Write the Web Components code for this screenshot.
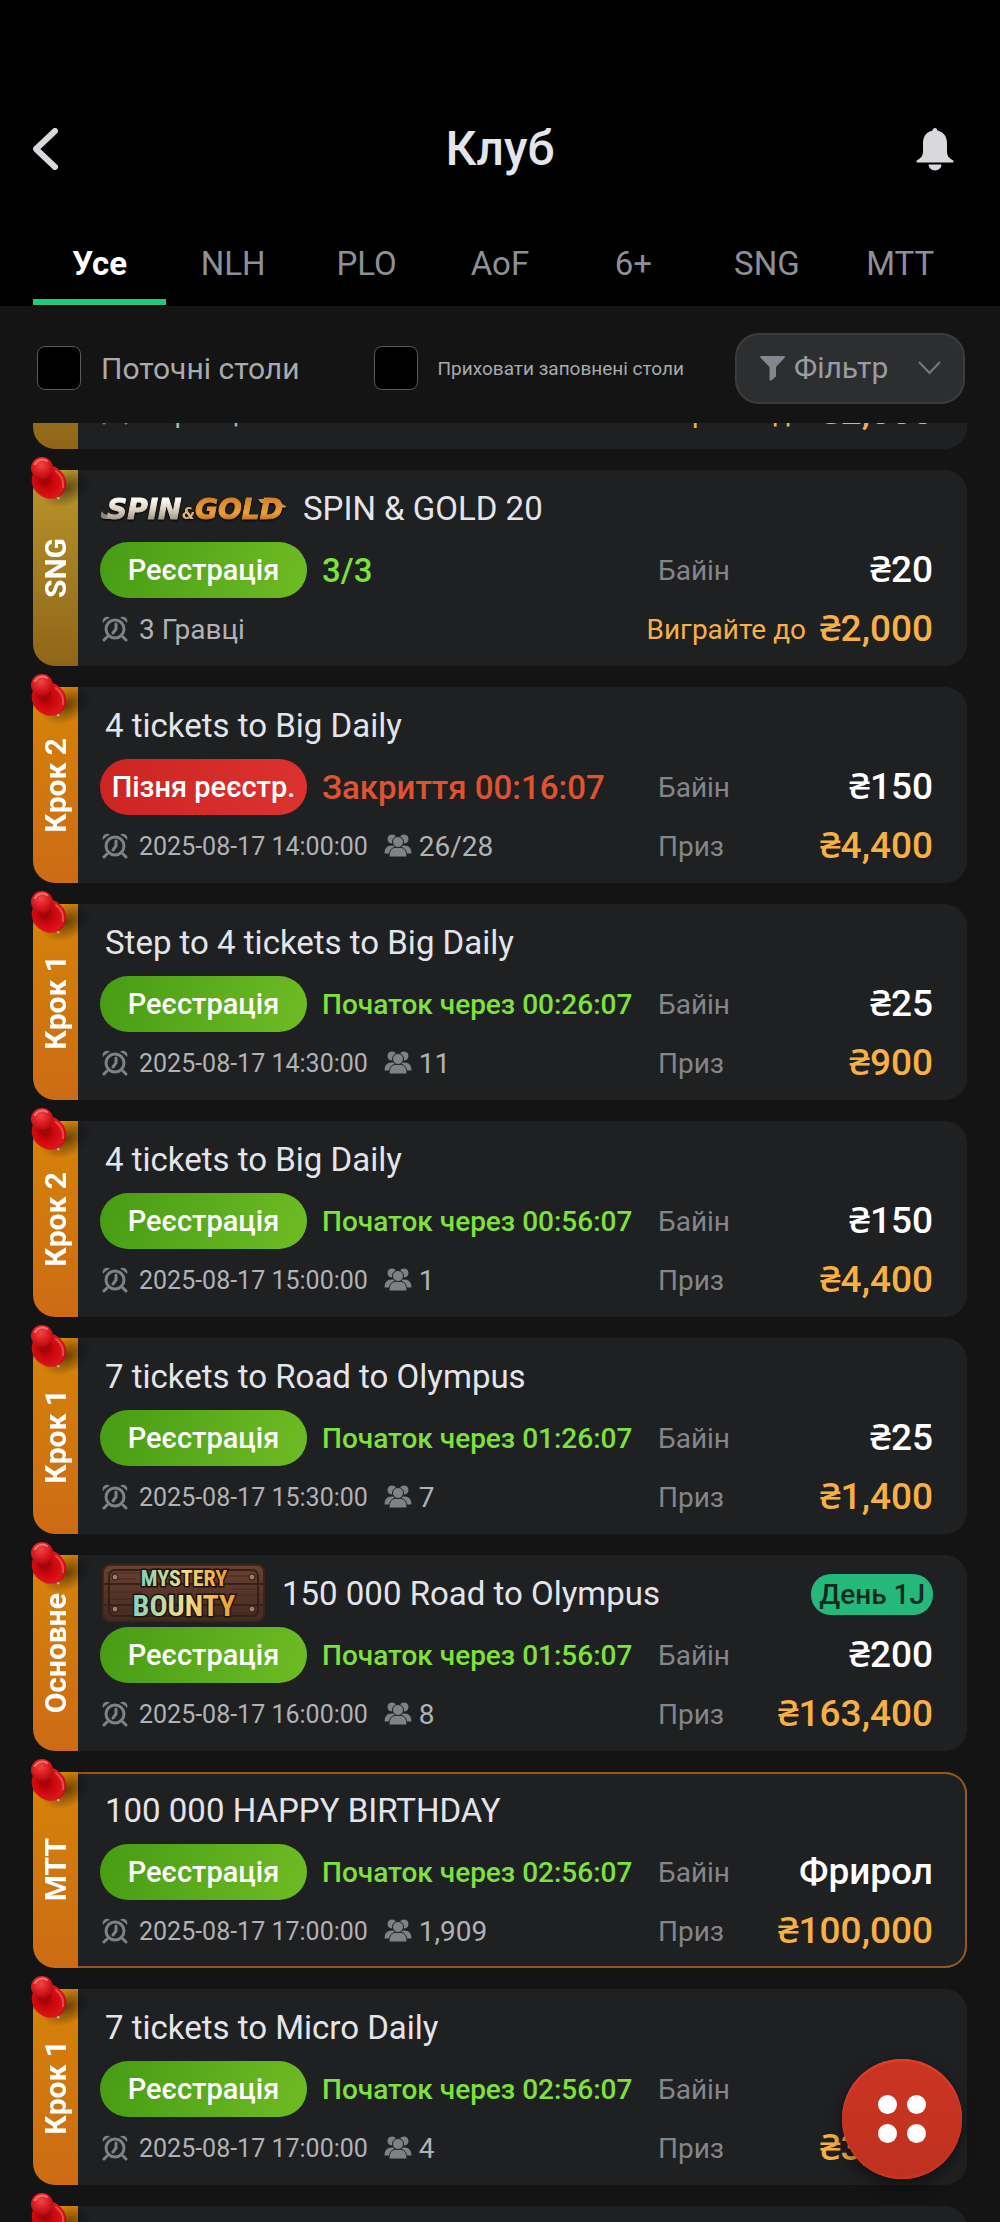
<!DOCTYPE html>
<html lang="uk">
<head>
<meta charset="utf-8">
<meta name="viewport" content="width=device-width, initial-scale=1">
<title>Клуб</title>
<style>
  body {
    margin: 0;
    background: #141414;
    color: #e4e5ea;
    font-family: Roboto, "Noto Sans", sans-serif;
  }
</style>
</head>
<body>
<club-app>
  <club-header slot="top">Клуб</club-header>
  <club-tabs slot="top" items="Усе,NLH,PLO,AoF,6+,SNG,MTT"></club-tabs>
  <filter-bar slot="top"></filter-bar>

  <tournament-card tone="gold" meta="3 Гравці" prize-label="Виграйте до" prize="₴2,000"></tournament-card>
  <tournament-card tone="gold" tag="SNG" name="SPIN &amp; GOLD 20" action="Реєстрація" status="3/3" status-size="large" meta="3 Гравці" buyin="₴20" prize-label="Виграйте до" prize="₴2,000">
    <spin-gold-logo slot="logo"></spin-gold-logo>
  </tournament-card>
  <tournament-card tag="Крок 2" name="4 tickets to Big Daily" action="Пізня реєстр." late status="Закриття 00:16:07" status-size="large" date="2025-08-17 14:00:00" players="26/28" buyin="₴150" prize="₴4,400"></tournament-card>
  <tournament-card tag="Крок 1" name="Step to 4 tickets to Big Daily" action="Реєстрація" status="Початок через 00:26:07" date="2025-08-17 14:30:00" players="11" buyin="₴25" prize="₴900"></tournament-card>
  <tournament-card tag="Крок 2" name="4 tickets to Big Daily" action="Реєстрація" status="Початок через 00:56:07" date="2025-08-17 15:00:00" players="1" buyin="₴150" prize="₴4,400"></tournament-card>
  <tournament-card tag="Крок 1" name="7 tickets to Road to Olympus" action="Реєстрація" status="Початок через 01:26:07" date="2025-08-17 15:30:00" players="7" buyin="₴25" prize="₴1,400"></tournament-card>
  <tournament-card tag="Основне" name="150 000 Road to Olympus" action="Реєстрація" status="Початок через 01:56:07" date="2025-08-17 16:00:00" players="8" buyin="₴200" prize="₴163,400" day="День 1J">
    <mystery-bounty-logo slot="logo"></mystery-bounty-logo>
  </tournament-card>
  <tournament-card tag="MTT" name="100 000 HAPPY BIRTHDAY" action="Реєстрація" status="Початок через 02:56:07" date="2025-08-17 17:00:00" players="1,909" buyin="Фрирол" prize="₴100,000" featured></tournament-card>
  <tournament-card tag="Крок 1" name="7 tickets to Micro Daily" action="Реєстрація" status="Початок через 02:56:07" date="2025-08-17 17:00:00" players="4" prize="₴3,000"></tournament-card>
  <tournament-card></tournament-card>

  <fab-menu slot="fab"></fab-menu>
</club-app>

<script>
const render = (element, html) => {
  const template = document.createElement('template');
  template.innerHTML = html;
  const shadow = element.attachShadow({ mode: 'open' });
  shadow.appendChild(template.content.cloneNode(true));
  return shadow;
};

class ClubApp extends HTMLElement {
  constructor() {
    super();
    render(this, `
      <style>
      :host {
        display: flex;
        flex-direction: column;
        height: 100vh;
      }

      .list {
        flex: 1;
        min-height: 0;
        overflow-y: auto;
        scrollbar-width: none;
        display: flex;
        flex-direction: column;
        gap: 21px;
        padding: 0 33px;
      }
      </style>
      <slot name="top"></slot>
      <main class="list"><slot></slot></main>
      <slot name="fab"></slot>
    `);
  }

  connectedCallback() {
    // the list opens scrolled past most of the first card
    requestAnimationFrame(() => {
      this.shadowRoot.querySelector('.list').scrollTop = 170;
    });
  }
}

class ClubHeader extends HTMLElement {
  constructor() {
    super();
    render(this, `
      <style>
      :host {
        display: block;
        background: #000;
        padding: 109px 33px 0;
      }

      .bar {
        display: flex;
        align-items: center;
        justify-content: space-between;
        height: 80px;
      }

      h1 {
        margin: 0;
        font-size: 48px;
        font-weight: 500;
        line-height: 56px;
      }

      button {
        display: flex;
        width: 52px;
        padding: 0;
        border: 0;
        background: none;
        color: #d8d8dd;
      }

      .bell {
        justify-content: flex-end;
        padding-right: 13px;
      }
      </style>
      <header class="bar">
        <button aria-label="Назад">
          <svg width="26" height="42" viewBox="0 0 26 42" fill="none" stroke="currentColor" stroke-width="6" stroke-linecap="round" stroke-linejoin="round"><path d="M22 3 3 21l19 18"/></svg>
        </button>
        <h1><slot></slot></h1>
        <button class="bell" aria-label="Сповіщення">
          <svg width="38" height="44" viewBox="0 0 38 44" fill="currentColor"><path d="M19 1c1.500 0 2.300 1 2.300 2.500C28 5 31 10 31 16v8c0 5 2 7 5.500 9 1.500 1 1.500 2.500 0 2.500h-35c-1.500 0-1.500-1.500 0-2.500C5 31 7 29 7 24v-8C7 10 10 5 16.700 3.500 16.700 2 17.500 1 19 1ZM12.500 37.500h13a6.500 6 0 0 1-13 0Z"/></svg>
        </button>
      </header>
    `);
  }
}

class ClubTabs extends HTMLElement {
  constructor() {
    super();
    const tabs = this.getAttribute('items').split(',');
    render(this, `
      <style>
      :host {
        display: block;
        background: #000;
        padding: 36px 33px 1px;
      }

      nav {
        display: grid;
        grid-auto-flow: column;
        grid-auto-columns: 1fr;
      }

      button {
        height: 80px;
        padding: 4px 0 0;
        border: 0;
        border-bottom: 6px solid transparent;
        background: none;
        color: #8d9097;
        font: 400 33px/70px Roboto, sans-serif;
      }

      .active {
        border-color: #20cb7b;
        color: #fff;
        font-weight: 700;
      }
      </style>
      <nav>${tabs.map((tab, i) => `<button${i ? '' : ' class="active"'}>${tab}</button>`).join('')}</nav>
    `);
  }
}

class FilterCheck extends HTMLElement {
  constructor() {
    super();
    render(this, `
      <style>
      :host {
        display: block;
        color: #a9aaae;
        font-size: 30px;
      }

      :host([small]) {
        font-size: 19px;
      }

      label {
        display: flex;
        align-items: center;
        gap: 20px;
        white-space: nowrap;
      }

      input {
        appearance: none;
        width: 44px;
        height: 44px;
        margin: 0;
        border: 1px solid #5a5a5c;
        border-radius: 8px;
        background: #000;
      }
      </style>
      <label><input type="checkbox"><slot></slot></label>
    `);
  }
}

class FilterBar extends HTMLElement {
  constructor() {
    super();
    render(this, `
      <style>
      :host {
        display: flex;
        align-items: center;
        gap: 74px;
        height: 117px;
        padding: 7px 35px 0 37px;
        box-sizing: border-box;
      }

      .filter {
        display: flex;
        align-items: center;
        box-sizing: border-box;
        width: 230px;
        height: 71px;
        margin-left: auto;
        padding: 0 22px 0 23px;
        border: 2px solid #3b3c3e;
        border-radius: 24px;
        background: #2d2e30;
      }

      filter-check {
        flex: none;
      }

      filter-check[small] {
        margin-right: -74px;
      }

      select {
        appearance: none;
        flex: 1;
        min-width: 0;
        padding: 0 9px;
        border: 0;
        background: none;
        color: #9b9ca3;
        font: 400 30px/36px Roboto, sans-serif;
      }
      </style>
      <filter-check>Поточні столи</filter-check>
      <filter-check small>Приховати заповнені столи</filter-check>
      <label class="filter">
        <svg width="25" height="26" viewBox="0 0 25 26" fill="#85868f"><path d="M1 1h23c1 0 1.300 1 .6 1.800L16 12v9.500l-4.500 3.800c-1 .7-2 .2-2-.9V12L.5 2.800C-.2 2 .1 1 1 1Z"/></svg>
        <select aria-label="Фільтр"><option>Фільтр</option></select>
        <svg width="23" height="14" viewBox="0 0 23 14" fill="none" stroke="#77787b" stroke-width="2"><path d="m1 1 10.500 11L22 1"/></svg>
      </label>
    `);
  }
}

class PushPin extends HTMLElement {
  constructor() {
    super();
    render(this, `
      <style>
      :host {
        display: block;
      }

      svg {
        display: block;
      }
      </style>
      <svg width="64" height="60" viewBox="0 0 64 60">
        <defs>
          <radialGradient id="shade"><stop offset="0" stop-color="#000" stop-opacity=".5"/><stop offset="1" stop-color="#000" stop-opacity="0"/></radialGradient>
          <radialGradient id="head" cx=".45" cy=".35" r=".65"><stop offset="0" stop-color="#ee4746"/><stop offset=".6" stop-color="#da1a1e"/><stop offset="1" stop-color="#b00d12"/></radialGradient>
          <radialGradient id="base" cx=".38" cy=".55" r=".65"><stop offset="0" stop-color="#8e0307"/><stop offset=".4" stop-color="#cb070b"/><stop offset=".85" stop-color="#dd171c"/><stop offset="1" stop-color="#a8080c"/></radialGradient>
        </defs>
        <ellipse cx="36" cy="31" rx="27" ry="17" fill="url(#shade)" transform="rotate(-28 36 31)"/>
        <path d="m23 36 5 6" stroke="#bbb" stroke-width="2"/>
        <ellipse cx="18" cy="25" rx="18" ry="16" fill="url(#base)" transform="rotate(38 18 25)"/>
        <path d="M3 15c4 4 3 7 8 10 5 1 10-2 9-6-1-3-1-5 0-9Z" fill="#a6060b"/>
        <circle cx="11" cy="11" r="11" fill="url(#head)"/>
        <path d="M4 7c2-4 8-6 12-3" fill="none" stroke="#f07672" stroke-width="2" stroke-linecap="round"/>
        <path d="M25 14c5 4 8 9 7 16" fill="none" stroke="#e84b4b" stroke-width="2" stroke-linecap="round"/>
      </svg>
    `);
  }
}

class SpinGoldLogo extends HTMLElement {
  constructor() {
    super();
    render(this, `
      <style>
      :host {
        display: block;
        margin-right: 10px;
      }

      svg {
        display: block;
        overflow: visible;
        filter: drop-shadow(0 1px 1px #000);
      }

      text {
        font-family: "DejaVu Sans", sans-serif;
        font-weight: 700;
        font-style: italic;
      }
      </style>
      <svg width="188" height="28" viewBox="0 0 188 28">
        <defs>
          <linearGradient id="silver" x2="0" y2="1"><stop offset=".2" stop-color="#fffaf0"/><stop offset=".55" stop-color="#d3cabb"/><stop offset="1" stop-color="#7d7468"/></linearGradient>
          <linearGradient id="gold" x2="0" y2="1"><stop offset=".2" stop-color="#d58529"/><stop offset=".6" stop-color="#eda03a"/><stop offset="1" stop-color="#97510f"/></linearGradient>
        </defs>
        <path d="M2 16c1 4 8 5 17 4l-2 4H5c-5 0-5-4-3-8Z" fill="#8d8376"/>
        <path d="M158 4h16l13 8-6 1-6-5h-14Z" fill="#cd9255"/>
        <text x="7" y="24" font-size="28" fill="url(#silver)" stroke="url(#silver)">SPIN</text>
        <text x="82" y="24" font-size="15" fill="#e0b27d">&amp;</text>
        <text x="95" y="24" font-size="28" fill="url(#gold)" stroke="url(#gold)">GOLD</text>
      </svg>
    `);
  }
}

class MysteryBountyLogo extends HTMLElement {
  constructor() {
    super();
    render(this, `
      <style>
      :host {
        display: block;
        margin: 0 12px 2px 2px;
      }

      svg {
        display: block;
        overflow: visible;
      }

      text {
        font-family: "Liberation Sans Narrow", "Roboto Condensed", Roboto, sans-serif;
        font-weight: 700;
        text-anchor: middle;
        paint-order: stroke;
        stroke: #20120c;
        stroke-width: 3px;
      }
      </style>
      <svg width="163" height="58" viewBox="0 0 163 58">
        <defs>
          <linearGradient id="paint"><stop offset="0" stop-color="#7fd3c4"/><stop offset=".5" stop-color="#f1e08a"/><stop offset="1" stop-color="#f19a2e"/></linearGradient>
          <linearGradient id="wood" x2="0" y2="1"><stop offset="0" stop-color="#694334"/><stop offset=".5" stop-color="#573529"/><stop offset="1" stop-color="#452a20"/></linearGradient>
        </defs>
        <rect x="1" y="1" width="161" height="56" rx="7" fill="url(#wood)" stroke="#3d251c" stroke-width="2"/>
        <path d="M2 20h160M2 41h160" stroke="#382118" stroke-width="2"/>
        <path d="M4 9h50M90 12h68M3 28h38M112 31h47M4 35h26M10 48h40M110 50h44M128 25h30M12 15h22" stroke="#48291f"/>
        <rect x="7" y="6" width="149" height="46" rx="6" fill="none" stroke="#352019" stroke-width="2"/>
        <g fill="#987f61" stroke="#2c1912"><circle cx="13" cy="13" r="3"/><circle cx="150" cy="13" r="3"/><circle cx="13" cy="45" r="3"/><circle cx="150" cy="45" r="3"/></g>
        <text x="82" y="22" font-size="22" fill="url(#paint)">MYSTERY</text>
        <text x="82" y="52" font-size="30" fill="url(#paint)">BOUNTY</text>
      </svg>
    `);
  }
}

const clockIcon = `
  <svg width="26" height="26" viewBox="0 0 26 26" fill="none" stroke="#808184" stroke-width="3">
    <circle cx="13" cy="13" r="9"/>
    <path d="M14 8v5l-3 4M5 21l-3 3M21 21l3 3" stroke-linecap="round"/>
    <path d="M1 7C-1 2 5-1 8 2 5 3 3 4.500 1 7ZM25 7c2-5-4-8-7-5 3 1 5 2.500 7 5Z" fill="#808184" stroke="none"/>
  </svg>`;

const playersIcon = `
  <svg width="28" height="26" viewBox="0 0 28 26" fill="#808184" stroke="#1f2022">
    <circle cx="8" cy="6" r="5"/><circle cx="20" cy="6" r="5"/>
    <path d="M0 21c0-6 3-9 8-9h3v9ZM28 21c0-6-3-9-8-9h-3v9Z"/>
    <path d="M5 24c0-7 3-10 9-10s9 3 9 10Z"/>
    <circle cx="14" cy="9" r="5.500"/>
  </svg>`;

class TournamentCard extends HTMLElement {
  constructor() {
    super();
    const get = (name, fallback = '') => this.getAttribute(name) || fallback;

    const shadow = render(this, `
      <style>
      :host {
        --tag: linear-gradient(#d58408, #cc6b15);
        --action: linear-gradient(105deg, #479c15, #6fbb24);
        --status: #7fe13c;
        display: flex;
        flex: none;
        position: relative;
      }

      :host([tone="gold"]) {
        --tag: linear-gradient(#ba952b, #8f6518);
      }

      :host([late]) {
        --action: linear-gradient(105deg, #cc2420, #dc3330);
        --status: #e2522f;
      }

      .tag {
        flex: none;
        display: flex;
        align-items: center;
        justify-content: center;
        width: 45px;
        border-radius: 22px 0 0 22px;
        background: var(--tag);
        color: #fff;
        font-size: 30px;
        font-weight: 700;
        line-height: 36px;
      }

      .tag span {
        writing-mode: vertical-rl;
        transform: rotate(180deg);
      }

      push-pin {
        position: absolute;
        left: -2px;
        top: -13px;
      }

      .body {
        flex: 1;
        min-width: 0;
        box-sizing: border-box;
        height: 196px;
        padding: 6px 34px 6px 22px;
        border-radius: 0 22px 22px 0;
        background: #1f2022;
        display: grid;
        grid-template-rows: 66px 56px 62px;
      }

      :host([featured]) .body {
        box-shadow: inset 0 2px #95581f, inset -2px 0 #95581f, inset 0 -2px #95581f;
      }

      .row {
        display: flex;
        align-items: center;
        white-space: nowrap;
      }

      h2 {
        flex: 1;
        margin: 0;
        padding-left: 5px;
        font-size: 33px;
        font-weight: 400;
        line-height: 40px;
      }

      .day {
        padding: 0 8px;
        border-radius: 20px;
        background: #24b97a;
        color: #10291e;
        font-size: 28px;
        font-weight: 500;
        line-height: 41px;
      }

      button {
        flex: none;
        width: 207px;
        height: 56px;
        margin-right: 15px;
        padding: 0;
        border: 0;
        border-radius: 28px;
        background: var(--action);
        color: #fff;
        font: 500 29px/36px Roboto, sans-serif;
      }

      .status {
        color: var(--status);
        font-size: 28px;
        font-weight: 500;
      }

      :host([status-size="large"]) .status {
        font-size: 33px;
      }

      .info {
        display: flex;
        align-items: center;
        color: #b1b2b6;
        font-size: 28px;
      }

      .info svg {
        flex: none;
        margin: 0 11px 0 2px;
      }

      .date {
        margin-right: 14px;
        font-size: 25px;
      }

      .info .date + svg {
        margin-right: 7px;
      }

      .money {
        display: flex;
        align-items: center;
        justify-content: space-between;
        gap: 14px;
        min-width: 275px;
        margin-left: auto;
        color: #85868a;
        font-size: 28px;
      }

      .money strong {
        margin-left: auto;
        color: #fff;
        font-size: 37px;
        font-weight: 500;
        line-height: 44px;
      }

      .money.prize strong, :host([tone="gold"]) .prize {
        color: #f7b043;
      }
      </style>
      <div class="tag"><span>${get('tag')}</span></div>
      <article class="body">
        <div class="row"><slot name="logo"></slot><h2></h2>${get('day') && `<span class="day">${get('day')}</span>`}</div>
        <div class="row">${get('action') && `
          <button>${get('action')}</button>
          <span class="status">${get('status')}</span>
          <div class="money"><span>Байін</span><strong>${get('buyin')}</strong></div>`}
        </div>
        <div class="row">${get('prize') && `
          <div class="info">${clockIcon}${get('date')
            ? `<span class="date">${get('date')}</span>${playersIcon}<span>${get('players')}</span>`
            : `<span>${get('meta')}</span>`}</div>
          <div class="money prize"><span>${get('prize-label', 'Приз')}</span><strong>${get('prize')}</strong></div>`}
        </div>
      </article>
      <push-pin></push-pin>
    `);
    shadow.querySelector('h2').textContent = get('name');
  }
}

class FabMenu extends HTMLElement {
  constructor() {
    super();
    render(this, `
      <style>
      :host {
        position: fixed;
        right: 38px;
        bottom: 43px;
      }

      button {
        display: grid;
        grid-template-columns: 19px 19px;
        gap: 10px;
        place-content: center;
        width: 120px;
        height: 120px;
        padding: 0;
        border: 0;
        border-radius: 50%;
        background: linear-gradient(#cb3522, #bf311f);
        box-shadow: 0 6px 16px rgba(0, 0, 0, 0.5), inset 0 2px 2px #e54131, inset 0 -2px 2px #d13527;
      }

      i {
        height: 19px;
        border-radius: 50%;
        background: #fff;
      }
      </style>
      <button aria-label="Меню"><i></i><i></i><i></i><i></i></button>
    `);
  }
}

customElements.define('push-pin', PushPin);
customElements.define('spin-gold-logo', SpinGoldLogo);
customElements.define('mystery-bounty-logo', MysteryBountyLogo);
customElements.define('filter-check', FilterCheck);
customElements.define('filter-bar', FilterBar);
customElements.define('club-header', ClubHeader);
customElements.define('club-tabs', ClubTabs);
customElements.define('tournament-card', TournamentCard);
customElements.define('fab-menu', FabMenu);
customElements.define('club-app', ClubApp);
</script>
</body>
</html>
